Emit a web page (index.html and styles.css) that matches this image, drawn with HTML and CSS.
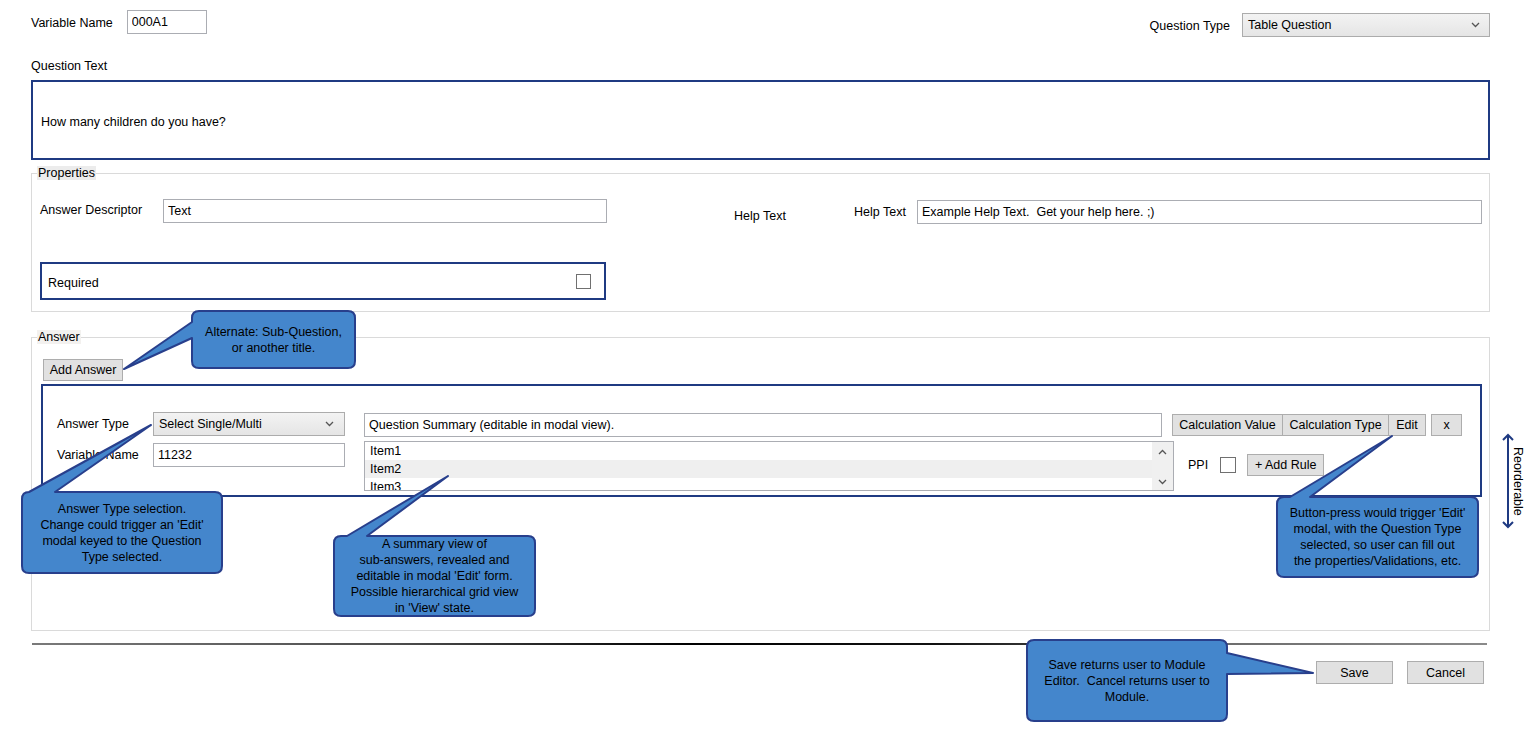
FILE: index.html
```html
<!DOCTYPE html>
<html lang="en">
<head>
    <meta charset="UTF-8">
    <meta name="viewport" content="width=device-width, initial-scale=1.0">
    <title>Question Editor</title>

    <!-- Styles -->
    <link rel="stylesheet" href="styles.css">
</head>
<body>
<div class="page">
    <!-- Top row: variable name and question type -->
    <div class="top-row">
        <div class="field">
            <span class="label">Variable Name</span>
            <input class="text-input var-input" type="text" value="000A1">
        </div>
        <div class="field qtype">
            <span class="label">Question Type</span>
            <div class="select qtype-select">
                <span>Table Question</span>
                <svg class="chevron" width="9" height="6" viewBox="0 0 9 6"><polyline points="1,1 4.5,4.5 8,1"/></svg>
            </div>
        </div>
    </div>

    <!-- Question text -->
    <div class="section-label">Question Text</div>
    <div class="question-text">How many children do you have?</div>

    <!-- Properties -->
    <fieldset class="group">
        <legend>Properties</legend>
        <div class="props-body">
            <div class="props-row">
                <span class="label desc-label">Answer Descriptor</span>
                <input class="text-input desc-input" type="text" value="Text">
                <span class="label help-lone">Help Text</span>
                <div class="help-field">
                    <span class="label">Help Text</span>
                    <input class="text-input help-input" type="text" value="Example Help Text.  Get your help here. ;)">
                </div>
            </div>
            <div class="required">
                <span class="label">Required</span>
                <span class="checkbox"></span>
            </div>
        </div>
    </fieldset>

    <!-- Answer -->
    <fieldset class="group answer-group">
        <legend>Answer</legend>
        <div class="answer-body">
            <button class="btn add-answer">Add Answer</button>
            <div class="answer-box">
                <div class="acol">
                    <div class="arow">
                        <span class="label">Answer Type</span>
                        <div class="select type-select">
                            <span>Select Single/Multi</span>
                            <svg class="chevron" width="9" height="6" viewBox="0 0 9 6"><polyline points="1,1 4.5,4.5 8,1"/></svg>
                        </div>
                    </div>
                    <div class="arow">
                        <span class="label">Variable Name</span>
                        <input class="text-input varname-input" type="text" value="11232">
                    </div>
                </div>
                <div class="mcol">
                    <input class="text-input summary-input" type="text" value="Question Summary (editable in modal view).">
                    <div class="listbox">
                        <div class="list-items">
                            <div class="list-item">Item1</div>
                            <div class="list-item alt">Item2</div>
                            <div class="list-item">Item3</div>
                        </div>
                        <div class="scrollbar">
                            <svg class="chevron" width="9" height="6" viewBox="0 0 9 6"><polyline points="1,5 4.5,1.5 8,5"/></svg>
                            <svg class="chevron" width="9" height="6" viewBox="0 0 9 6"><polyline points="1,1 4.5,4.5 8,1"/></svg>
                        </div>
                    </div>
                </div>
                <div class="rcol">
                    <div class="calc-row">
                        <button class="btn calc-value">Calculation Value</button>
                        <button class="btn calc-type">Calculation Type</button>
                        <button class="btn edit">Edit</button>
                        <button class="btn close">x</button>
                    </div>
                    <div class="ppi-row">
                        <span class="label ppi-label">PPI</span>
                        <span class="checkbox ppi-check"></span>
                        <button class="btn add-rule">+ Add Rule</button>
                    </div>
                </div>
            </div>
        </div>
    </fieldset>

    <div class="divider"></div>

    <div class="actions">
        <button class="btn">Save</button>
        <button class="btn">Cancel</button>
    </div>
</div>

<!-- Reorder hint -->
<svg class="reorder-arrow" width="12" height="98" viewBox="0 0 12 98">
    <line x1="6" y1="3" x2="6" y2="95"/>
    <polyline points="1,8 6,3 11,8"/>
    <polyline points="1,90 6,95 11,90"/>
</svg>
<span class="reorder-text">Reorderable</span>

<!-- Annotation callouts -->
<svg class="callouts" width="1531" height="751" viewBox="0 0 1531 751">
    <path d="M199,311 H348 Q355,311 355,318 V361 Q355,368 348,368 H199 Q192,368 192,361 V338 L124,369 L192,322 V318 Q192,311 199,311 Z"/>
    <path d="M29,492 L151,425 L55,492 H215 Q222,492 222,499 V566 Q222,573 215,573 H29 Q22,573 22,566 V499 Q22,492 29,492 Z"/>
    <path d="M341,536 H347 L448,476 L367,536 H528 Q535,536 535,543 V609 Q535,616 528,616 H341 Q334,616 334,609 V543 Q334,536 341,536 Z"/>
    <path d="M1284,497 H1290 L1392,436 L1310,497 H1471 Q1478,497 1478,504 V570 Q1478,577 1471,577 H1284 Q1277,577 1277,570 V504 Q1277,497 1284,497 Z"/>
    <path d="M1034,640 H1220 Q1227,640 1227,647 V653 L1313,673 L1227,674 V714 Q1227,721 1220,721 H1034 Q1027,721 1027,714 V647 Q1027,640 1034,640 Z"/>
</svg>
<div class="callout-text note-alt">Alternate: Sub-Question,<br>or another title.</div>
<div class="callout-text note-type">Answer Type selection.<br>Change could trigger an 'Edit'<br>modal keyed to the Question<br>Type selected.</div>
<div class="callout-text note-summary">A summary view of<br>sub-answers, revealed and<br>editable in modal 'Edit' form.<br>Possible hierarchical grid view<br>in 'View' state.</div>
<div class="callout-text note-edit">Button-press would trigger 'Edit'<br>modal, with the Question Type<br>selected, so user can fill out<br>the properties/Validations, etc.</div>
<div class="callout-text note-save">Save returns user to Module<br>Editor.&nbsp; Cancel returns user to<br>Module.</div>
</body>
</html>
```

FILE: styles.css
```css
/* General body styles */
body {
    margin: 0;
    background: #fff;
    color: #000;
    font-family: "Liberation Sans", Arial, sans-serif;
    font-size: 12.5px;
    position: relative;
    width: 1531px;
    height: 751px;
    overflow: hidden;
}

.page {
    margin: 0 41px 0 31px;
}

.label {
    line-height: 15px;
    white-space: nowrap;
}

/* Inputs, selects, buttons */
.text-input {
    box-sizing: border-box;
    height: 24px;
    margin: 0;
    padding: 0 4px;
    border: 1px solid #abadb3;
    background: #fff;
    color: #000;
    font: inherit;
    outline: none;
}

.select {
    box-sizing: border-box;
    height: 24px;
    display: flex;
    align-items: center;
    justify-content: space-between;
    padding: 0 9px 0 5px;
    border: 1px solid #acacac;
    background: linear-gradient(#f3f3f3, #e5e5e5);
}

.chevron polyline {
    fill: none;
    stroke: #555;
    stroke-width: 1.3;
}

.btn {
    display: block;
    box-sizing: border-box;
    height: 22px;
    margin: 0;
    padding: 0 5px;
    border: 1px solid #adadad;
    background: #e1e1e1;
    color: #000;
    font: inherit;
    white-space: nowrap;
}

.checkbox {
    display: block;
    box-sizing: border-box;
    width: 15px;
    height: 15px;
    border: 1px solid #707070;
    background: #fff;
}

/* Top row */
.top-row {
    display: flex;
    justify-content: space-between;
    align-items: flex-start;
    padding-top: 10px;
}

.field {
    display: flex;
    align-items: center;
}

.field > .label {
    margin-top: 2px;
}

.var-input {
    width: 80px;
    margin-left: 14px;
}

.qtype {
    margin-top: 3px;
}

.qtype .label {
    margin-right: 12px;
}

.qtype-select {
    width: 248px;
}

/* Question text */
.section-label {
    margin-top: 22px;
    line-height: 15px;
}

.question-text {
    box-sizing: border-box;
    height: 80px;
    margin-top: 6px;
    padding: 3px 0 0 8px;
    display: flex;
    align-items: center;
    border: 2px solid #1f3a82;
}

/* Fieldset groups */
.group {
    margin: 6px 0 0;
    padding: 0;
    min-width: 0;
    border: 1px solid #dadada;
}

.group legend {
    margin-left: 5px;
    padding: 0 1px;
    line-height: 14px;
    background: #ececec;
}

/* Properties */
.props-body {
    padding: 19px 7px 11px 8px;
}

.props-row {
    display: flex;
    align-items: flex-start;
}

.desc-label {
    width: 123px;
    margin-top: 4px;
}

.desc-input {
    width: 444px;
}

.help-lone {
    margin: 10px 0 0 127px;
}

.help-field {
    margin-left: auto;
    margin-top: 1px;
    display: flex;
    align-items: center;
}

.help-field .label {
    width: 63px;
}

.help-input {
    width: 565px;
}

.required {
    box-sizing: border-box;
    width: 566px;
    height: 38px;
    margin-top: 38px;
    padding: 0 13px 0 6px;
    display: flex;
    align-items: center;
    justify-content: space-between;
    border: 2px solid #1f3a82;
}

.required .label {
    margin-top: 4px;
}

/* Answer */
.answer-group {
    margin-top: 18px;
}

.answer-group legend {
    background: #f3f1ef;
}

.answer-body {
    padding: 15px 7px 133px 9px;
}

.add-answer {
    width: 80px;
    margin-left: 2px;
}

.answer-box {
    box-sizing: border-box;
    height: 113px;
    margin-top: 3px;
    padding: 26px 0 0 14px;
    display: grid;
    grid-template-columns: 307px 808px auto;
    align-items: start;
    border: 2px solid #1f3a82;
}

.arow {
    display: flex;
    align-items: center;
}

.arow + .arow {
    margin-top: 7px;
}

.arow .label {
    width: 96px;
}

.type-select,
.varname-input {
    width: 192px;
}

.type-select {
    padding-right: 10px;
}

.mcol {
    margin-top: 1px;
}

.summary-input {
    display: block;
    width: 798px;
}

.listbox {
    box-sizing: border-box;
    width: 810px;
    height: 50px;
    margin-top: 4px;
    display: flex;
    overflow: hidden;
    border: 1px solid #abadb3;
    background: #fff;
}

.list-items {
    flex: 1;
}

.list-item {
    height: 18px;
    line-height: 18px;
    padding-left: 5px;
}

.list-item.alt {
    background: #efefef;
}

.scrollbar {
    box-sizing: border-box;
    width: 21px;
    padding: 7px 0 5px;
    display: flex;
    flex-direction: column;
    justify-content: space-between;
    align-items: center;
    background: #f0f0f0;
}

.rcol {
    margin-top: 2px;
}

.calc-row {
    display: flex;
}

.calc-row .btn + .btn {
    margin-left: -1px;
}

.calc-value { width: 111px; }
.calc-type { width: 107px; }
.edit { width: 38px; }

.calc-row .btn.close {
    width: 31px;
    margin-left: 5px;
}

.ppi-row {
    display: flex;
    align-items: center;
    margin-top: 18px;
}

.ppi-label {
    margin-left: 16px;
}

.ppi-check {
    width: 16px;
    height: 16px;
    margin-left: 12px;
}

.add-rule {
    width: 77px;
    margin-left: 11px;
}

/* Footer */
.divider {
    height: 2px;
    margin: 12px 3px 0 1px;
    background: linear-gradient(90deg, #7a7a7a, #4d4d4d 25%, #000 45%, #111 62%, #6a6a6a 80%, #8a8a8a);
}

.actions {
    display: flex;
    justify-content: flex-end;
    gap: 14px;
    margin-top: 16px;
    padding-right: 6px;
}

.actions .btn {
    width: 77px;
    height: 23px;
}

/* Reorder hint */
.reorder-arrow {
    position: absolute;
    left: 1502px;
    top: 432px;
}

.reorder-arrow line,
.reorder-arrow polyline {
    fill: none;
    stroke: #1f3a82;
    stroke-width: 2;
}

.reorder-text {
    position: absolute;
    left: 1511px;
    top: 447px;
    line-height: 14px;
    writing-mode: vertical-rl;
}

/* Annotation callouts */
.callouts {
    position: absolute;
    left: 0;
    top: 0;
    pointer-events: none;
}

.callouts path {
    fill: #4486cc;
    stroke: #283f8c;
    stroke-width: 2;
    stroke-linejoin: round;
}

.callout-text {
    position: absolute;
    display: flex;
    align-items: center;
    justify-content: center;
    text-align: center;
    line-height: 16px;
    color: #000;
}

.note-alt { left: 192px; top: 311px; width: 163px; height: 57px; }
.note-type { left: 22px; top: 492px; width: 200px; height: 81px; }
.note-summary { left: 334px; top: 536px; width: 201px; height: 80px; }
.note-edit { left: 1277px; top: 497px; width: 201px; height: 80px; }
.note-save { left: 1027px; top: 640px; width: 200px; height: 81px; }
```
